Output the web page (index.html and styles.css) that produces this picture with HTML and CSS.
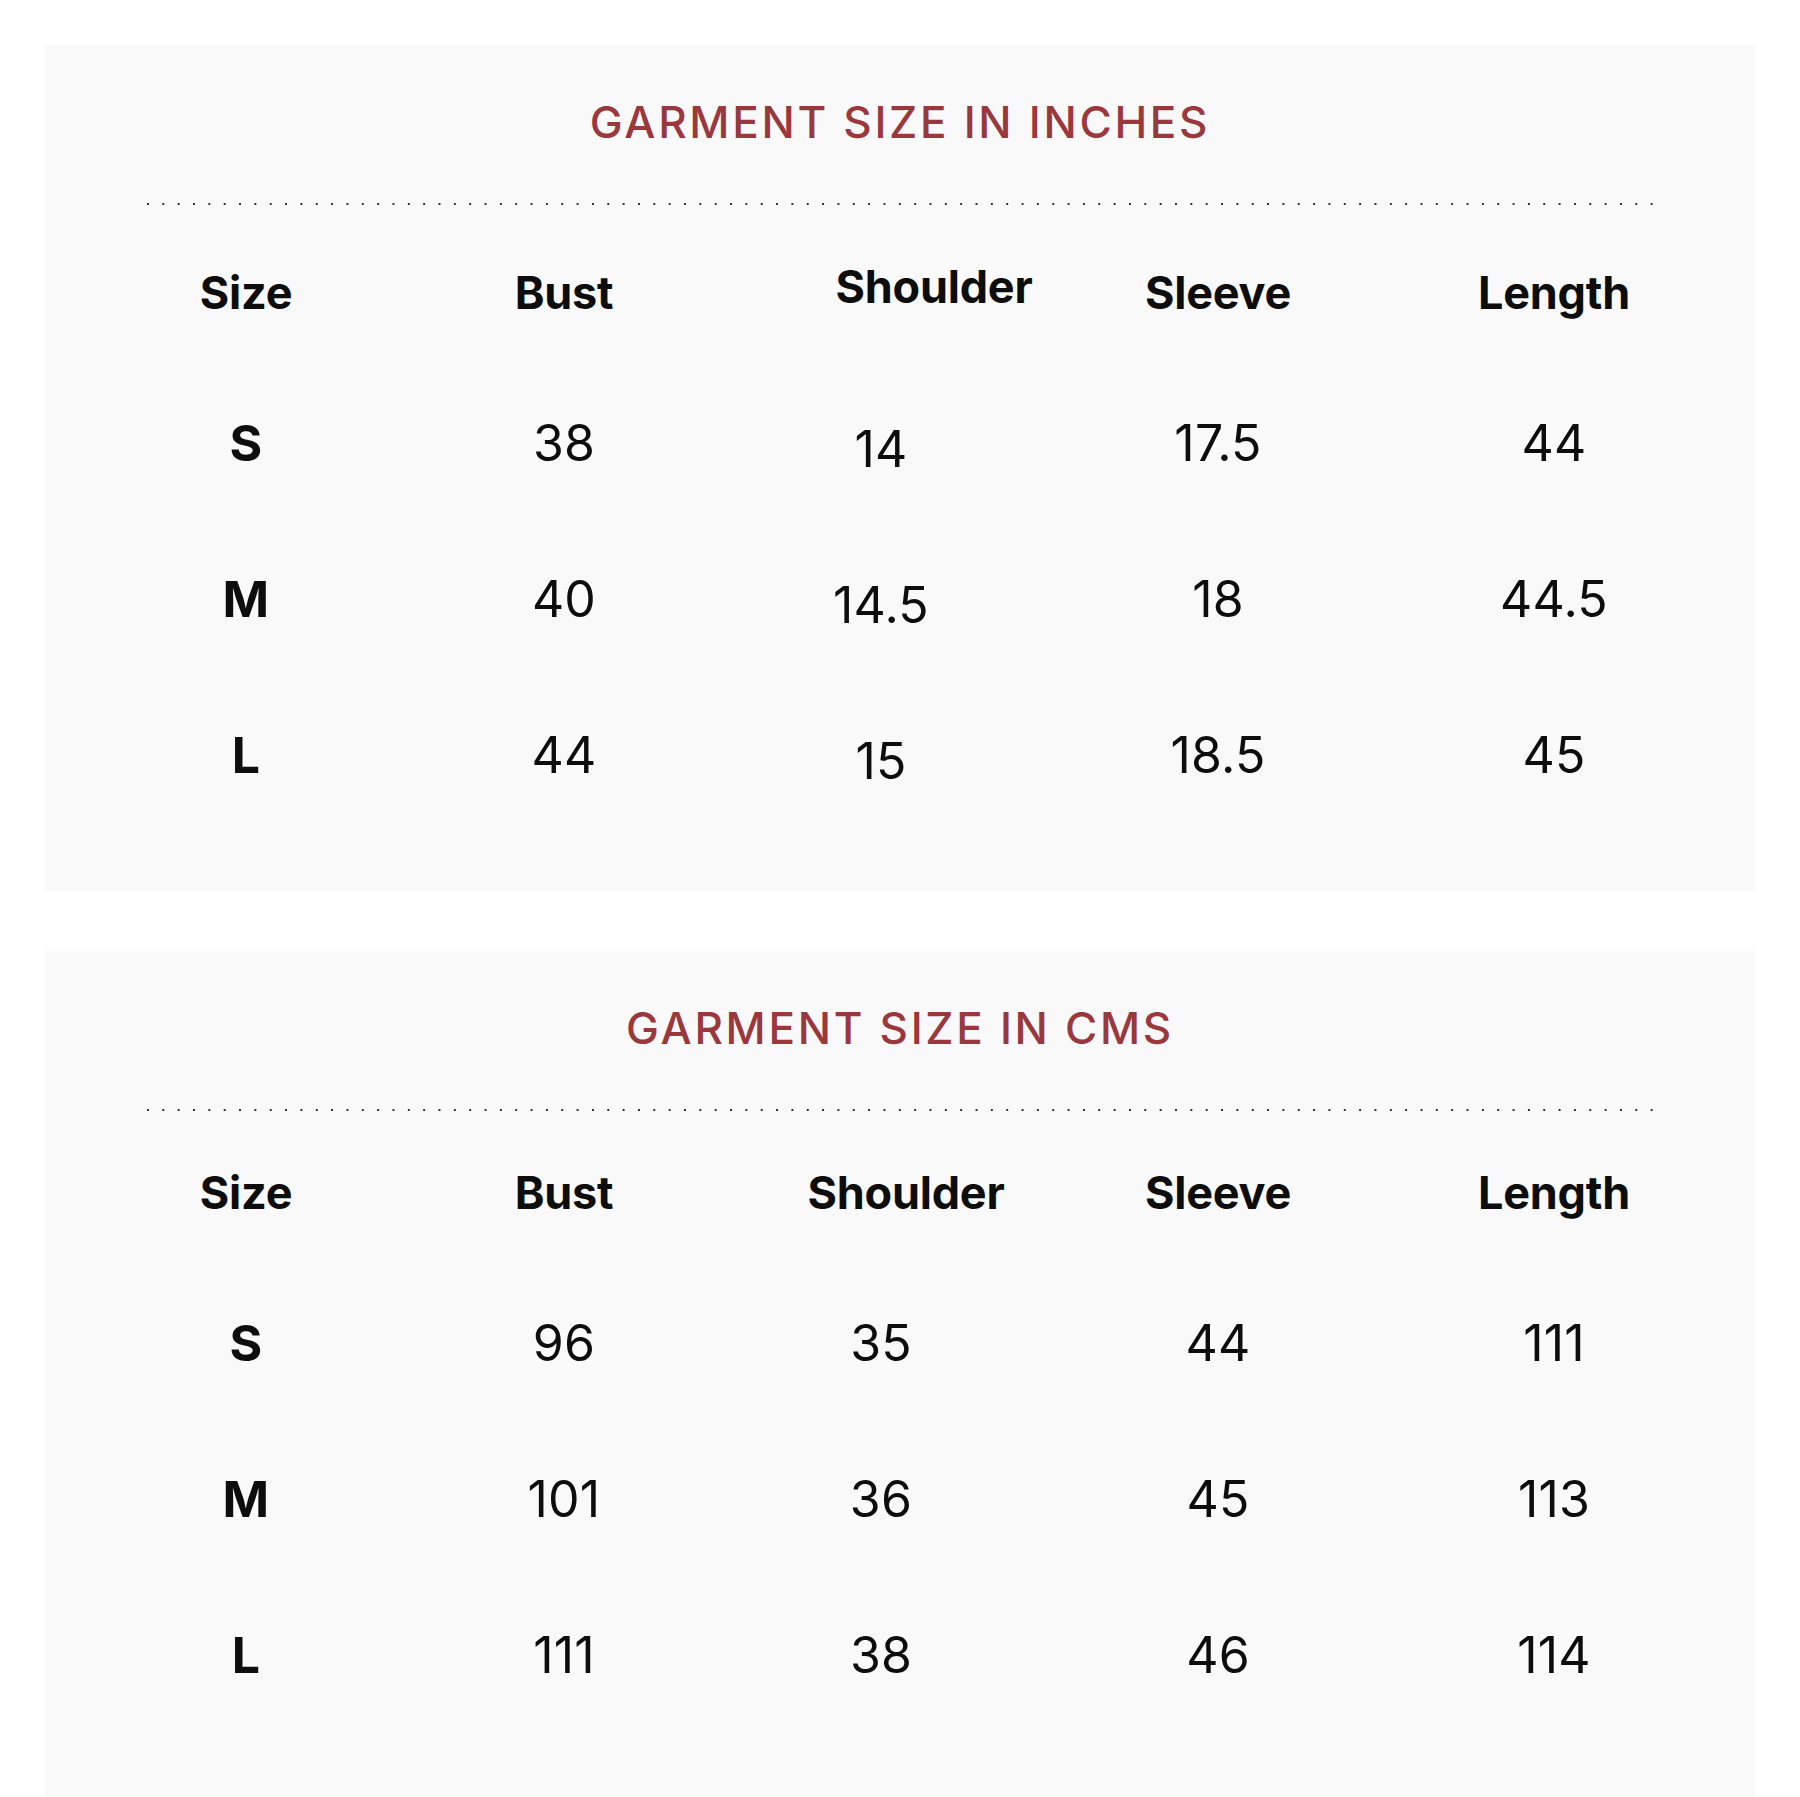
FILE: index.html
```html
<!DOCTYPE html>
<html lang="en">
<head>
<meta charset="utf-8">
<title>Garment Size Chart</title>
<link rel="stylesheet" href="styles.css">
</head>
<body>
<main class="page">
  <section class="card card--in">
    <h2 class="card__title">GARMENT SIZE IN INCHES</h2>
    <div class="divider"></div>
    <div class="chart">
      <div class="row row--head">
        <div class="cell">Size</div>
        <div class="cell">Bust</div>
        <div class="cell cell--shoulder-head">Shoulder</div>
        <div class="cell">Sleeve</div>
        <div class="cell">Length</div>
      </div>
      <div class="row">
        <div class="cell cell--size">S</div>
        <div class="cell">38</div>
        <div class="cell cell--shoulder-val">14</div>
        <div class="cell">17.5</div>
        <div class="cell">44</div>
      </div>
      <div class="row">
        <div class="cell cell--size">M</div>
        <div class="cell">40</div>
        <div class="cell cell--shoulder-val">14.5</div>
        <div class="cell">18</div>
        <div class="cell">44.5</div>
      </div>
      <div class="row">
        <div class="cell cell--size">L</div>
        <div class="cell">44</div>
        <div class="cell cell--shoulder-val">15</div>
        <div class="cell">18.5</div>
        <div class="cell">45</div>
      </div>
    </div>
  </section>

  <section class="card card--cm">
    <h2 class="card__title">GARMENT SIZE IN CMS</h2>
    <div class="divider"></div>
    <div class="chart">
      <div class="row row--head">
        <div class="cell">Size</div>
        <div class="cell">Bust</div>
        <div class="cell cell--shoulder-head">Shoulder</div>
        <div class="cell">Sleeve</div>
        <div class="cell">Length</div>
      </div>
      <div class="row">
        <div class="cell cell--size">S</div>
        <div class="cell">96</div>
        <div class="cell">35</div>
        <div class="cell">44</div>
        <div class="cell">111</div>
      </div>
      <div class="row">
        <div class="cell cell--size">M</div>
        <div class="cell">101</div>
        <div class="cell">36</div>
        <div class="cell">45</div>
        <div class="cell">113</div>
      </div>
      <div class="row">
        <div class="cell cell--size">L</div>
        <div class="cell">111</div>
        <div class="cell">38</div>
        <div class="cell">46</div>
        <div class="cell">114</div>
      </div>
    </div>
  </section>
</main>
</body>
</html>
```

FILE: styles.css
```css
* {
  box-sizing: border-box;
}

html, body {
  margin: 0;
  padding: 0;
  background: #ffffff;
}

body {
  font-family: Inter, "Noto Sans", "Liberation Sans", sans-serif;
  color: #0d0d0d;
}

.page {
  display: flex;
  flex-direction: column;
  gap: 60px;
  padding: 45px 45px 45px;
}

.card {
  background: #f9f9f9;
  height: 846px;
  padding-top: 50px;
  display: flex;
  flex-direction: column;
}

.card__title {
  margin: 0;
  height: 54px;
  line-height: 54px;
  text-align: center;
  font-size: 44px;
  font-weight: 500;
  letter-spacing: 2.7px;
  color: #9b383e;
}

.divider {
  margin: 54px 102px 0 102px;
  height: 2px;
  background-image: linear-gradient(to right, #2e2e2e 0, #2e2e2e 2px, transparent 2px);
  background-size: 15.35px 2px;
  background-repeat: repeat-x;
}

.chart {
  margin-left: 42px;
  display: flex;
  flex-direction: column;
}

.card--in .chart {
  margin-top: 48px;
}

.card--cm .chart {
  margin-top: 42px;
}

.row {
  display: grid;
  grid-template-columns: 318px 318px 316px 358px 314px;
  height: 156px;
  align-items: center;
  font-size: 50px;
  font-weight: 400;
  letter-spacing: 0.2px;
}

.row--head {
  height: 80px;
  margin-bottom: 32px;
  font-size: 45px;
  font-weight: 700;
  letter-spacing: -0.2px;
}

.cell {
  text-align: center;
  line-height: 1.21;
}

.cell--size {
  font-weight: 700;
}

.card--in .cell--shoulder-head {
  padding-left: 106px;
  padding-bottom: 12px;
}

.card--cm .cell--shoulder-head {
  padding-left: 50px;
}

.cell--shoulder-val {
  padding-top: 12px;
}
```
